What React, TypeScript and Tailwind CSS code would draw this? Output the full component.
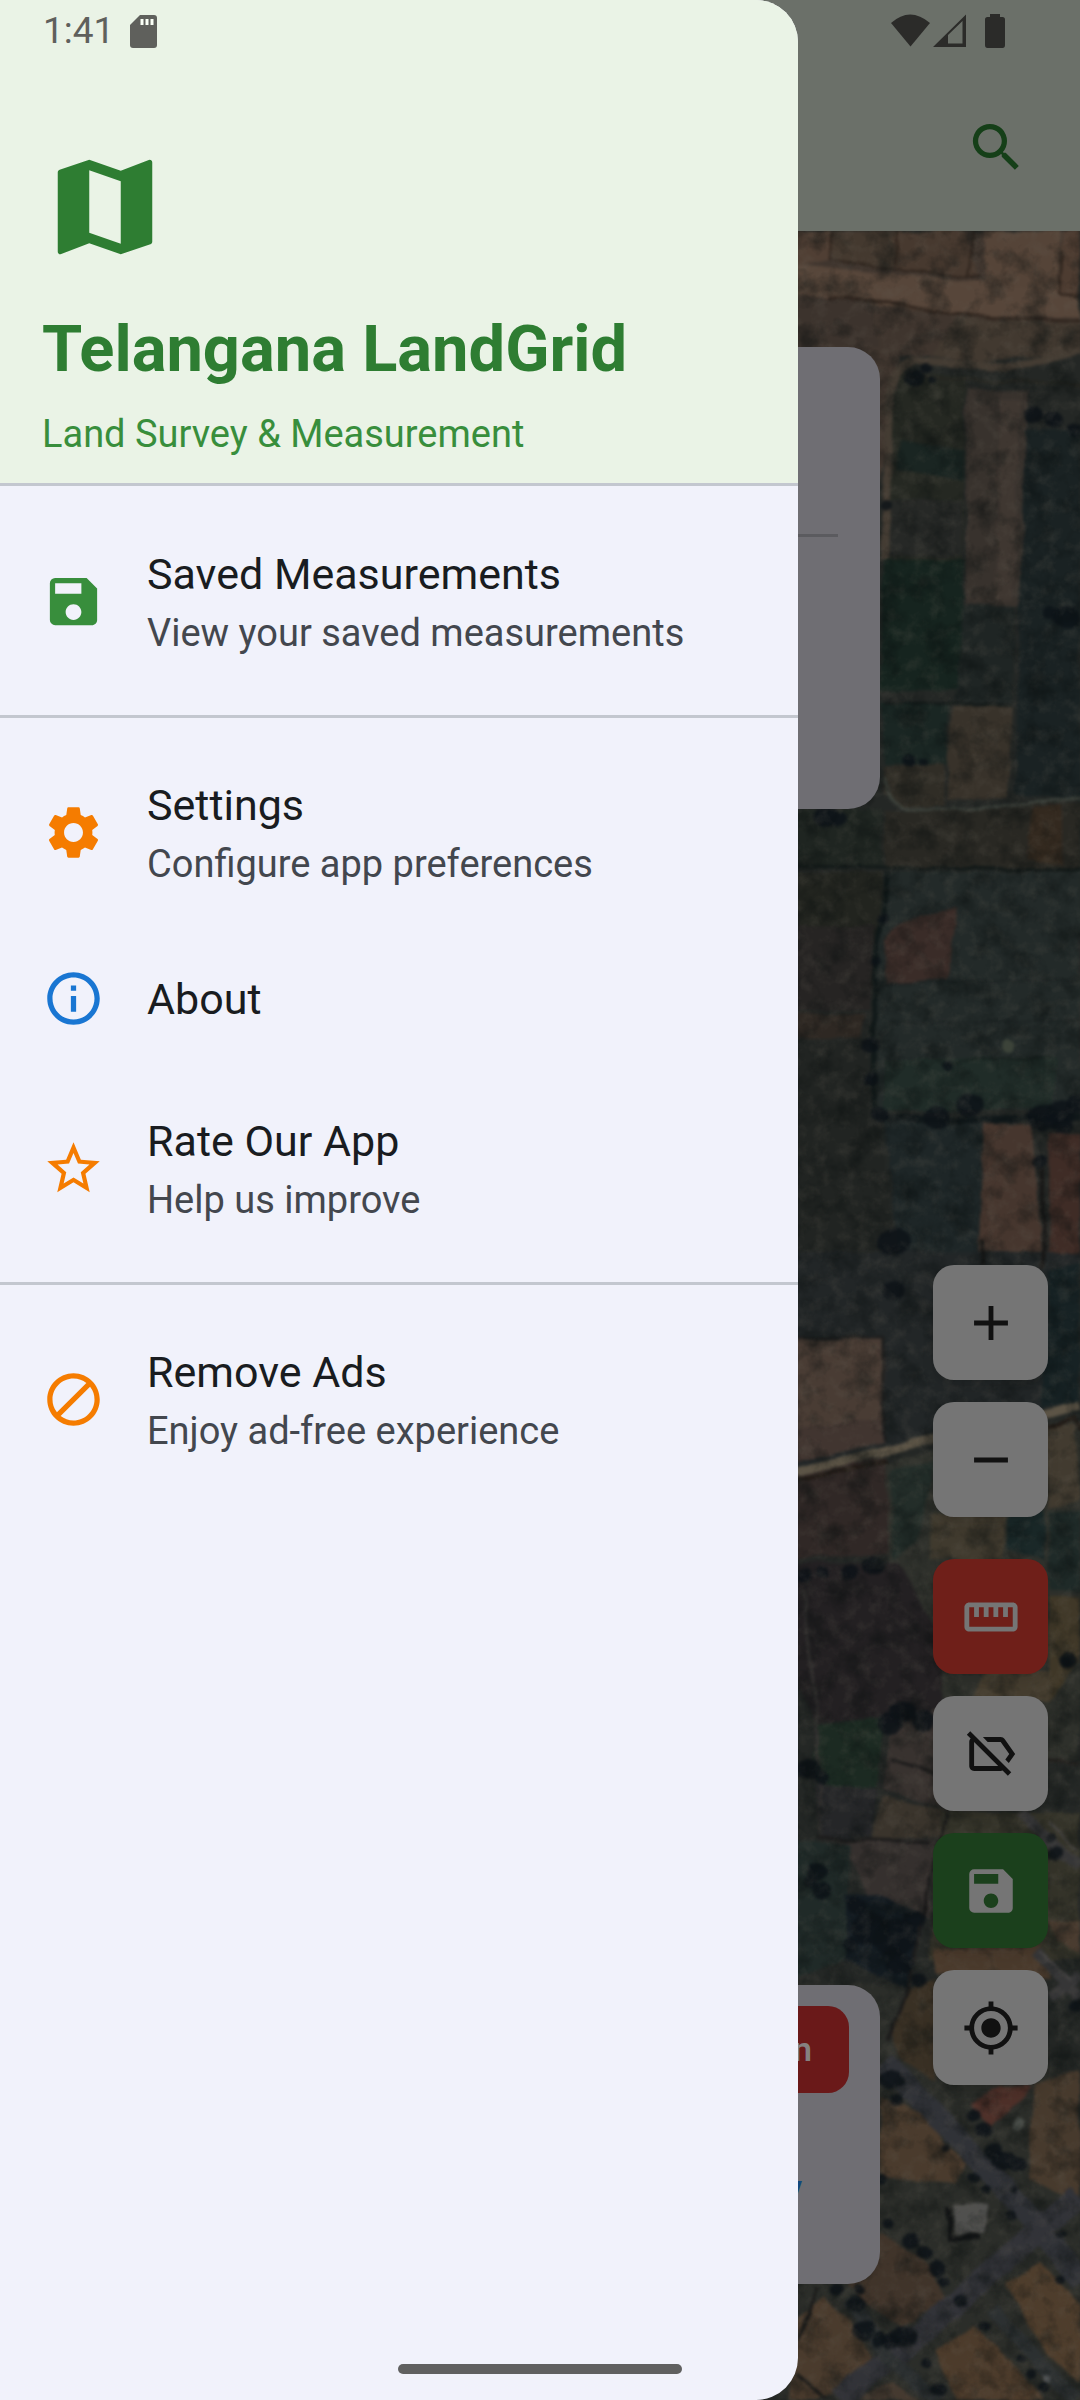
import React from "react";
import {
  MdAdd, MdBlock, MdInfoOutline, MdMap, MdMyLocation, MdOutlineLabelOff, MdRemove,
  MdSave, MdSearch, MdSettings, MdStarBorder, MdStraighten,
} from "react-icons/md";

type Field = { d: string; c: string };

const fields: Field[] = [
  // ploughed strip along the top
  { d: "M780 231H1080V354L1010 352L900 356L880 480H780Z", c: "#3f352e" },
  { d: "M780 262L900 275L1000 284L1080 286V318L960 314L900 308L780 292Z", c: "#57463a" },
  { d: "M780 231H834L832 259L780 268Z", c: "#503f34" },
  { d: "M834 231H892L894 268L834 260Z", c: "#44392f" },
  { d: "M892 231H965L978 279L894 270Z", c: "#47392f" },
  { d: "M985 231H1060L1056 296L984 282Z", c: "#554438" },
  { d: "M1062 231H1080V296H1058Z", c: "#4d3c31" },
  { d: "M780 298L870 300L880 346H780Z", c: "#3c332d" },
  { d: "M960 318L1080 324V350L980 362L930 356Z", c: "#423930" },
  // upper fields
  { d: "M900 372L965 376L963 560L885 560L890 420Z", c: "#252822" },
  { d: "M900 440L964 452V480L896 470Z", c: "#1a2522" },
  { d: "M886 500H962V556H884Z", c: "#262826" },
  { d: "M884 560H964V690H880Z", c: "#16241f" },
  { d: "M966 388L1028 392L1024 606L966 604Z", c: "#38322d" },
  { d: "M1000 400H1020L1014 600H996Z", c: "#3f3731" },
  { d: "M1026 430H1080V800L1015 794L1020 606Z", c: "#1a2223" },
  { d: "M964 606H1016L1012 702H955Z", c: "#1f2524" },
  { d: "M880 704H948V764H884Z", c: "#1a2623" },
  { d: "M952 706L1012 704L1008 798L946 800Z", c: "#38322a" },
  { d: "M882 766L944 764V806L902 808L884 792Z", c: "#302d26" },
  // middle fields
  { d: "M780 810H882V868H780Z", c: "#1f2521" },
  { d: "M884 812L1080 802V868H884Z", c: "#292823" },
  { d: "M1030 808L1062 804V866L1028 860Z", c: "#33291f" },
  { d: "M780 872H882V926L874 990H780Z", c: "#22241f" },
  { d: "M780 926H876L870 1010H780Z", c: "#262423" },
  { d: "M780 1012L864 1014L860 1038H780Z", c: "#2e2823" },
  { d: "M886 872H1080V1110H880L872 990Z", c: "#232a29" },
  { d: "M885 940Q895 915 958 908L946 980L888 984Z", c: "#3a2c28" },
  { d: "M885 1060L1056 1056L1050 1108L885 1112Z", c: "#202c28" },
  { d: "M780 1040L868 1044L878 1115L896 1250H780Z", c: "#212422" },
  { d: "M885 1122H984L978 1270H900Z", c: "#1e2627" },
  { d: "M984 1122L1032 1126L1042 1266L978 1264Z", c: "#46362e" },
  { d: "M1050 1134H1080V1266L1048 1268Z", c: "#3f2c26" },
  { d: "M780 1252H1080V1400L780 1475Z", c: "#222627" },
  { d: "M1050 1272L1080 1262V1402L1040 1408Z", c: "#172224" },
  { d: "M780 1338H884Q888 1352 884 1440L780 1464Z", c: "#493c34" },
  { d: "M780 1430L884 1418V1442L780 1466Z", c: "#413530" },
  // below the main road
  { d: "M780 1476L888 1456L890 1552L780 1560Z", c: "#302826" },
  { d: "M885 1462L1048 1424L1080 1420V1760H936L890 1560Z", c: "#2e302b" },
  { d: "M890 1470L935 1462L916 1540L894 1560Z", c: "#232d29" },
  { d: "M930 1514L1008 1510L1002 1560H930Z", c: "#403a2e" },
  { d: "M1010 1510H1044V1560L1006 1548Z", c: "#1a2828" },
  { d: "M1046 1426L1074 1424L1080 1500L1048 1510Z", c: "#423b30" },
  { d: "M1048 1512H1080V1590H1048Z", c: "#1f2a28" },
  { d: "M1048 1596H1080V1660L1050 1700Z", c: "#403828" },
  { d: "M780 1564L898 1562L940 1640L944 1724H814L780 1640Z", c: "#232022" },
  { d: "M816 1726L884 1718L876 1800L814 1780Z", c: "#1c2a22" },
  { d: "M890 1730L945 1706V1810L884 1790Z", c: "#38322f" },
  { d: "M984 1670H1050V1700H975Z", c: "#453d2f" },
  { d: "M814 1784L878 1788L872 1836L822 1838Z", c: "#252628" },
  { d: "M884 1796L945 1812L938 1836L870 1840Z", c: "#3a342c" },
  { d: "M820 1842L936 1838L928 1920L870 1900L850 1860Z", c: "#35302e" },
  { d: "M940 1812L1080 1812V1960H930Z", c: "#343329" },
  { d: "M780 1840L850 1844L846 1960L780 1985Z", c: "#202a28" },
  { d: "M845 1896L880 1894L925 1918L906 1990L845 1960Z", c: "#141c22" },
  { d: "M935 1948L1040 1944L1050 1978L935 1974Z", c: "#4a3a2c" },
  { d: "M1048 1920H1080V1955L1056 1940Z", c: "#4a3c30" },
  // settlement at the bottom
  { d: "M780 1985L890 1985L1080 2080V2400H780Z", c: "#2b2d29" },
  { d: "M906 1992L935 1980V2080L900 2060L892 2034Z", c: "#393024" },
  { d: "M880 2098Q930 2106 944 2144L966 2164L956 2184L880 2178Z", c: "#4a3b2d" },
  { d: "M1036 2084L1080 2070V2204L1030 2180L1030 2130Z", c: "#473a2d" },
  { d: "M970 2106L1000 2086H1032L1000 2120L990 2128Z", c: "#4e3029" },
  { d: "M880 2232L932 2268L946 2300L902 2326L868 2306L848 2286Z", c: "#40342a" },
  { d: "M796 2318L822 2296L850 2320L874 2360L856 2384L816 2400H790Z", c: "#4a3b2d" },
  { d: "M1006 2284L1040 2262L1080 2304V2384L1042 2348Z", c: "#4e3d2c" },
  { d: "M936 2352L976 2326L1010 2362L1044 2400H956Z", c: "#4c3b2b" },
  { d: "M858 2400L892 2382L920 2400Z", c: "#453a30" },
];

const lines: { d: string; c: string; w: number }[] = [
  { d: "M832 231L831 259L894 270L978 278M894 268L897 231M974 231L968 278M1062 250L1058 294L1080 296", c: "#2c221b", w: 2 },
  { d: "M828 298L890 302L950 314L1080 322", c: "#30251e", w: 3 },
  { d: "M885 560L890 400Q892 364 916 360L1010 368L1080 350", c: "#443c33", w: 8 },
  { d: "M905 376L1080 386", c: "#252520", w: 3 },
  { d: "M884 776Q890 806 908 810L970 809L1080 798", c: "#3c413b", w: 3 },
  { d: "M798 866L1080 870M884 704H1012", c: "#121918", w: 3 },
  { d: "M886 872L884 920L876 950L876 986L872 1030L876 1112", c: "#111919", w: 5 },
  { d: "M880 984L1080 980M886 1024L1080 1020", c: "#1c2222", w: 2 },
  { d: "M946 1064L970 1060L1050 1056", c: "#18211e", w: 2 },
  { d: "M888 1119L980 1120L1080 1116", c: "#101719", w: 7 },
  { d: "M1041 1156L1044 1250L1042 1270M983 1240V1266", c: "#181716", w: 4 },
  { d: "M798 1338H884V1440", c: "#1c1d1d", w: 3 },
  { d: "M780 1476L940 1437L1048 1414L1080 1405", c: "#5c5446", w: 9 },
  { d: "M780 1484L888 1460M1048 1428L1074 1418L1080 1430", c: "#211a15", w: 4 },
  { d: "M803 1590L814 1690L822 1840", c: "#32302f", w: 3 },
  { d: "M890 1760L938 1774M818 1838L930 1842M946 1812L924 1910L906 1996L888 2040", c: "#1c1b1b", w: 3 },
  { d: "M1040 1760L1080 1764", c: "#211f1c", w: 3 },
  { d: "M884 2062L960 2140L1042 2230L1080 2282", c: "#303237", w: 22 },
  { d: "M840 2400L925 2330L1036 2232L1080 2196", c: "#323338", w: 24 },
  { d: "M1020 1812L1080 1868M1036 1950L1080 1998M1080 1974L1050 1996", c: "#363637", w: 11 },
  { d: "M992 2308L1030 2352L1076 2400M850 2300L890 2360L938 2400", c: "#2c3031", w: 14 },
  { d: "M816 2286L798 2340M798 2372L826 2400", c: "#1a1a19", w: 3 },
  { d: "M1048 1820L1078 1852M1040 1950L1070 1980", c: "#4a4847", w: 2 },
];

const trees: [number, number, number][] = [
  [914, 378, 10], [926, 368, 6], [932, 380, 4], [887, 504, 6], [1034, 414, 10], [1054, 420, 10], [1076, 430, 8],
  [1066, 616, 13], [1050, 614, 7], [910, 760, 8], [924, 761, 4], [826, 816, 12], [838, 820, 8], [884, 920, 6],
  [876, 962, 5], [870, 1046, 9], [872, 1078, 8], [882, 1116, 10], [936, 1117, 14], [970, 1105, 13], [947, 1065, 5],
  [1044, 1118, 16], [1060, 1112, 14], [1076, 1104, 10], [1040, 1162, 8], [895, 1242, 17], [1062, 1126, 10],
  [894, 1290, 12], [874, 1565, 12], [850, 1572, 9], [822, 1573, 6], [804, 1576, 8], [1068, 1660, 10], [1066, 1662, 7],
  [890, 1724, 12], [902, 1712, 12], [922, 1722, 12], [808, 1770, 12], [820, 1778, 7], [818, 1872, 11], [822, 1892, 10],
  [810, 1882, 7], [856, 1906, 10], [870, 1928, 20], [896, 1936, 22], [850, 1946, 9], [914, 1920, 10], [900, 1964, 14],
  [918, 1982, 8], [1056, 1852, 8], [1050, 1836, 5], [1078, 2006, 8], [892, 2080, 12], [896, 2100, 7], [946, 2150, 4],
  [974, 2116, 7], [984, 2130, 8], [994, 2150, 9], [1004, 2160, 12], [1018, 2166, 9], [974, 2178, 6], [986, 2190, 5],
  [1010, 2216, 6], [1016, 2192, 4], [912, 2242, 9], [924, 2254, 8], [938, 2268, 9], [944, 2280, 6], [888, 2222, 6],
  [1062, 2234, 5], [836, 2290, 8], [856, 2304, 9], [864, 2330, 12], [880, 2340, 8], [904, 2336, 13], [892, 2342, 9],
  [960, 2300, 7], [986, 2326, 6], [1020, 2360, 5], [1032, 2374, 6], [1044, 2388, 6], [926, 2364, 6], [938, 2388, 8],
  [860, 2290, 6], [1060, 2280, 5], [880, 2180, 7],
];

function SatelliteMap() {
  return (
    <svg className="absolute inset-0 h-full w-full" viewBox="0 231 1080 2169" preserveAspectRatio="xMaxYMin slice" aria-hidden="true">
      <defs>
        <filter id="terrain" x="0" y="0" width="100%" height="100%" colorInterpolationFilters="sRGB">
          <feTurbulence type="fractalNoise" baseFrequency="0.03" numOctaves="3" seed="4" result="warp" />
          <feDisplacementMap in="SourceGraphic" in2="warp" scale="8" xChannelSelector="R" yChannelSelector="G" />
          <feGaussianBlur stdDeviation="1.8" />
        </filter>
        <filter id="speckle" x="0" y="0" width="100%" height="100%" colorInterpolationFilters="sRGB">
          <feTurbulence type="fractalNoise" baseFrequency="0.07" numOctaves="4" seed="11" />
          <feColorMatrix values="0 0 0 0 0.4  0 0 0 0 0.38  0 0 0 0 0.34  1.2 0 0 0 -0.55" />
        </filter>
        <filter id="shade" x="0" y="0" width="100%" height="100%" colorInterpolationFilters="sRGB">
          <feTurbulence type="fractalNoise" baseFrequency="0.04" numOctaves="4" seed="23" />
          <feColorMatrix values="0 0 0 0 0.03  0 0 0 0 0.05  0 0 0 0 0.05  0 1.8 0 0 -0.8" />
        </filter>
      </defs>
      <rect y="231" width="1080" height="2169" fill="#23272a" />
      <g filter="url(#terrain)">
        <rect x="760" y="215" width="340" height="2200" fill="#242725" />
        {fields.map((f) => <path key={f.d} d={f.d} fill={f.c} />)}
        {lines.map((l) => <path key={l.d} d={l.d} stroke={l.c} strokeWidth={l.w} fill="none" />)}
        {trees.map(([x, y, r]) => (
          <ellipse key={`${x}-${y}`} cx={x} cy={y} rx={r} ry={r * 0.85} fill="#0d1317" opacity="0.85" />
        ))}
        <circle cx="1009" cy="1045" r="7" fill="#3c4339" />
        <path d="M949 2206V2237H982" stroke="#121415" strokeWidth="6" fill="none" />
        <path d="M954 2203H986V2233H954Z" fill="#50504e" />
        <circle cx="1019" cy="2123" r="6" fill="#4b4f4a" />
        <circle cx="1048" cy="2379" r="4" fill="#57595a" />
      </g>
      <rect x="780" y="231" width="300" height="2169" filter="url(#speckle)" opacity="0.4" />
      <rect x="780" y="231" width="300" height="2169" filter="url(#shade)" opacity="0.6" />
    </svg>
  );
}

type MapButton = { label: string; icon: React.ReactNode; look: string };

const mapButtons: MapButton[] = [
  { label: "Zoom in", icon: <MdAdd />, look: "bg-[#757575] text-[#111111]" },
  { label: "Zoom out", icon: <MdRemove />, look: "bg-[#757575] text-[#111111]" },
  { label: "Measure", icon: <MdStraighten />, look: "mt-5 bg-[#6f1f19] text-[#757575]" },
  { label: "Hide labels", icon: <MdOutlineLabelOff />, look: "bg-[#757575] text-[#111111]" },
  { label: "Save", icon: <MdSave />, look: "bg-[#1b401c] text-[#757575]" },
  { label: "My location", icon: <MdMyLocation />, look: "bg-[#757575] text-[#111111]" },
];

type Entry = { title: string; note?: string; icon: React.ReactNode; tint: string };

const groups: Entry[][] = [
  [{ title: "Saved Measurements", note: "View your saved measurements", icon: <MdSave />, tint: "text-[#388e3c]" }],
  [
    { title: "Settings", note: "Configure app preferences", icon: <MdSettings />, tint: "text-[#f57c00]" },
    { title: "About", icon: <MdInfoOutline />, tint: "text-[#1976d2]" },
    { title: "Rate Our App", note: "Help us improve", icon: <MdStarBorder />, tint: "text-[#f57c00]" },
  ],
  [{ title: "Remove Ads", note: "Enjoy ad-free experience", icon: <MdBlock />, tint: "text-[#f57c00]" }],
];

function DrawerEntry({ entry }: { entry: Entry }) {
  return (
    <li>
      <button type="button" className={`flex w-full items-center gap-[42px] px-[42px] text-left ${entry.note ? "h-[189px]" : "h-[147px] pb-1"}`}>
        <span className={`shrink-0 text-[63px] ${entry.tint}`}>{entry.icon}</span>
        <span className="flex flex-col">
          <span className="text-[43px] leading-[62px] text-[#191c20]">{entry.title}</span>
          {entry.note && <span className="text-[38px] leading-[56px] text-[#43474e]">{entry.note}</span>}
        </span>
      </button>
    </li>
  );
}

function Drawer() {
  return (
    <aside className="absolute inset-y-0 left-0 w-[798px] overflow-hidden rounded-r-[42px] bg-[#f1f2fb]">
      <header className="flex h-[486px] flex-col border-b-[3px] border-[#c3c7cf] bg-[#eaf3e6] px-[42px] pt-[144px]">
        <MdMap className="text-[126px] text-[#2e7d32]" />
        <h1 className="mt-[37px] text-[65px] leading-[84px] font-bold text-[#2e7d32]">Telangana LandGrid</h1>
        <p className="mt-4 text-[38px] leading-[54px] text-[#388e3c]">Land Survey &amp; Measurement</p>
      </header>
      <nav className="pt-[21px]">
        {groups.map((group, i) => (
          <React.Fragment key={group[0].title}>
            {i > 0 && <hr className="mt-[19px] mb-5 h-[3px] border-0 bg-[#c3c7cf]" />}
            <ul>{group.map((entry) => <DrawerEntry key={entry.title} entry={entry} />)}</ul>
          </React.Fragment>
        ))}
      </nav>
    </aside>
  );
}

function StatusBar() {
  return (
    <div className="absolute inset-x-0 top-0 flex h-[62px] items-center justify-between pr-[75px] pl-[43px]">
      <div className="flex items-center gap-4 text-[37px] leading-[42px] text-[#5f605c]">
        <span>1:41</span>
        <svg className="h-[33px] w-[27px]" viewBox="0 0 27 33" aria-hidden="true">
          <path d="M10 0H24Q27 0 27 3V30Q27 33 24 33H3Q0 33 0 30V10Z" fill="#5f605c" />
          <path d="M10.500 4h3v6h-3zM15.500 4h3v6h-3zM20.500 4h3v6h-3z" fill="#fafff6" />
        </svg>
      </div>
      <svg className="h-[34px] w-[115px]" viewBox="890 14 115 34" aria-hidden="true" fill="#2b2b29">
        <path d="M891 23Q910 6 930 23L910.500 46.500Z" />
        <path fillRule="evenodd" d="M933 47L966 14.500V47ZM948 35L962.500 21V43.500H948Z" />
        <path d="M990 14H1000V17H1002.500Q1005 17 1005 19.500V45Q1005 48 1002.500 48H987.500Q985 48 985 45V19.500Q985 17 987.500 17H990Z" />
      </svg>
    </div>
  );
}

export default function App() {
  return (
    <div className="relative flex min-h-screen w-full flex-col overflow-hidden bg-[#23272a] font-[Roboto,sans-serif]">
      <header className="flex h-[231px] items-end justify-end bg-[#6b7069] pr-[52px] pb-[52px]">
        <button type="button" aria-label="Search" className="text-[63px] text-[#153f18]"><MdSearch /></button>
      </header>
      <main className="relative grow">
        <SatelliteMap />
        <section className="absolute top-[116px] right-[200px] left-[42px] h-[462px] rounded-[32px] bg-[#6f6e73] px-[42px] pt-[187px]">
          <hr className="h-[3px] border-0 bg-[#5b5b5f]" />
        </section>
        <section className="absolute right-[200px] bottom-[116px] left-[42px] flex h-[299px] flex-col items-end rounded-[32px] bg-[#6f6e73] pt-[21px] pr-[31px]">
          <button type="button" className="h-[87px] rounded-[21px] bg-[#6a1919] px-[37px] text-[34px] font-semibold text-[#858181]">n</button>
          <span className="mr-[47px] mt-[75px] text-[37px] leading-[42px] font-bold text-[#12477d]">y</span>
        </section>
        <div className="absolute right-8 bottom-[315px] flex flex-col gap-[22px]">
          {mapButtons.map((b) => (
            <button key={b.label} type="button" aria-label={b.label} className={`flex h-[115px] w-[115px] items-center justify-center rounded-[21px] text-[58px] shadow-lg ${b.look}`}>
              {b.icon}
            </button>
          ))}
        </div>
      </main>
      <Drawer />
      <StatusBar />
      <div className="absolute bottom-[26px] left-1/2 h-[10px] w-[284px] -translate-x-1/2 rounded-full bg-[#606060]" />
    </div>
  );
}
